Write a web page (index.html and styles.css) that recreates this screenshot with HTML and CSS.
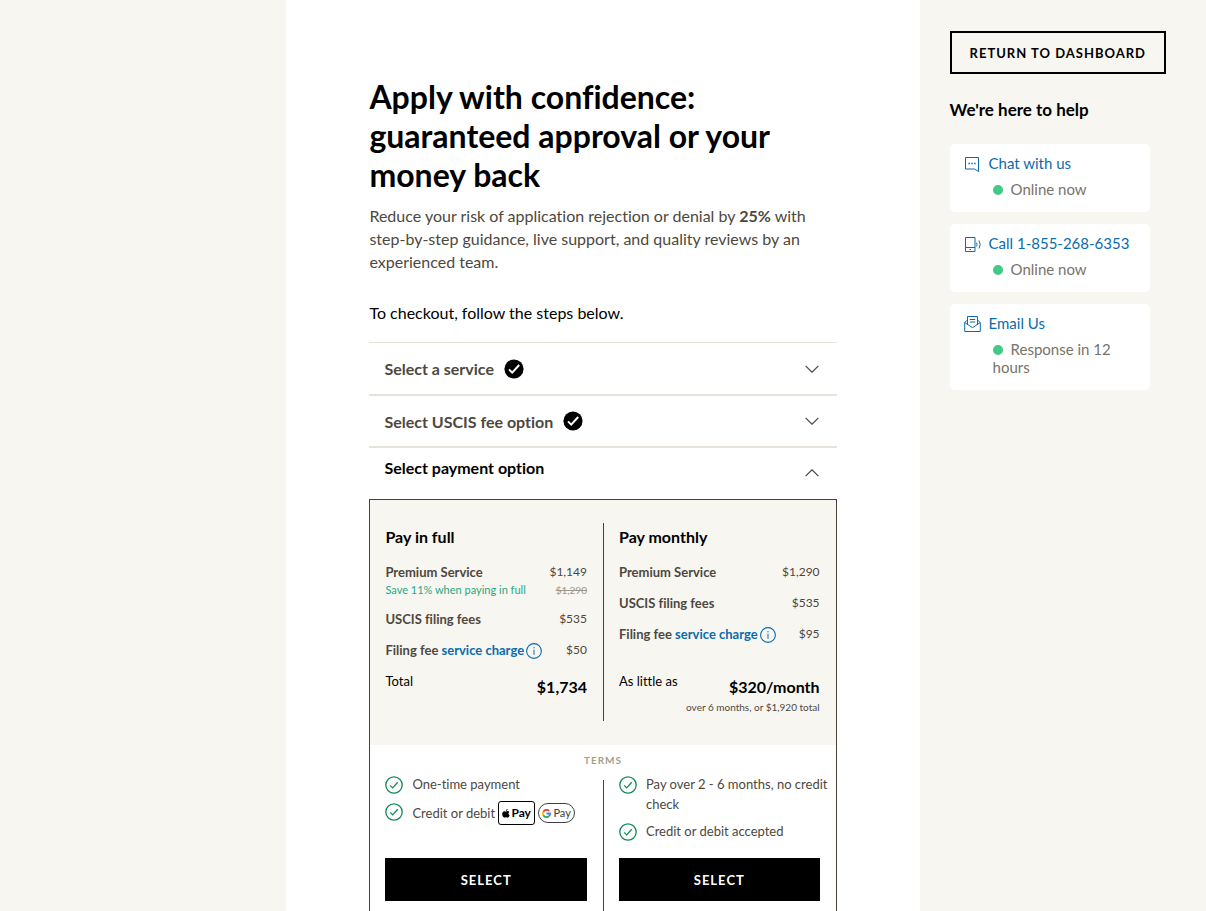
FILE: index.html
```html
<!DOCTYPE html>
<html lang="en">
<head>
<meta charset="utf-8">
<meta name="viewport" content="width=device-width, initial-scale=1">
<title>Checkout</title>
<link rel="stylesheet" href="styles.css">
</head>
<body>
<svg class="sprite" aria-hidden="true">
  <symbol id="badge" viewBox="0 0 20 20"><circle cx="10" cy="10" r="9.6"/><path d="M5 10.4l3.2 3.2 7-7.6" fill="none" stroke="#fff" stroke-width="2"/></symbol>
  <symbol id="chevron" viewBox="0 0 14 8"><path d="M.6.8L7 7.200 13.400.8" fill="none" stroke="currentColor" stroke-width="1.200"/></symbol>
  <symbol id="info" viewBox="0 0 16 16"><g fill="none" stroke="currentColor"><circle cx="8" cy="8" r="7.400" stroke-width="1.100"/><path d="M8 6.800v5M8 4v1.400"/></g></symbol>
  <symbol id="tick" viewBox="0 0 18 18"><g fill="none" stroke="currentColor" stroke-width="1.300"><circle cx="9" cy="9" r="8.200"/><path d="M5.200 9.400l2.500 2.500 5-5.600"/></g></symbol>
</svg>
<div class="page">
  <main class="content">
    <h1 class="title">Apply with confidence: guaranteed approval or your money back</h1>
    <p class="lead">Reduce your risk of application rejection or denial by <strong>25%</strong> with step-by-step guidance, live support, and quality reviews by an experienced team.</p>
    <p class="hint">To checkout, follow the steps below.</p>

    <div class="steps">
      <button type="button" class="step" aria-expanded="false"><span>Select a service</span><svg class="badge"><use href="#badge"/></svg><svg class="chevron"><use href="#chevron"/></svg></button>
      <button type="button" class="step" aria-expanded="false"><span>Select USCIS fee option</span><svg class="badge"><use href="#badge"/></svg><svg class="chevron"><use href="#chevron"/></svg></button>
      <button type="button" class="step step-open" aria-expanded="true"><span>Select payment option</span><svg class="chevron chevron-up"><use href="#chevron"/></svg></button>
    </div>

    <section class="panel">
      <div class="prices">
        <div class="plan">
          <h2 class="plan-name">Pay in full</h2>
          <dl class="fees">
            <div class="fee"><dt>Premium Service<small class="save">Save 11% when paying in full</small></dt><dd>$1,149<s class="old">$1,290</s></dd></div>
            <div class="fee"><dt>USCIS filing fees</dt><dd>$535</dd></div>
            <div class="fee"><dt>Filing fee <a class="charge" href="#charge">service charge<svg class="info"><use href="#info"/></svg></a></dt><dd>$50</dd></div>
            <div class="fee total"><dt>Total</dt><dd><strong>$1,734</strong></dd></div>
          </dl>
        </div>
        <div class="plan">
          <h2 class="plan-name">Pay monthly</h2>
          <dl class="fees">
            <div class="fee"><dt>Premium Service</dt><dd>$1,290</dd></div>
            <div class="fee"><dt>USCIS filing fees</dt><dd>$535</dd></div>
            <div class="fee"><dt>Filing fee <a class="charge" href="#charge">service charge<svg class="info"><use href="#info"/></svg></a></dt><dd>$95</dd></div>
            <div class="fee total"><dt>As little as</dt><dd><strong>$320/month</strong><small>over 6 months, or $1,920 total</small></dd></div>
          </dl>
        </div>
      </div>
      <h3 class="terms-title">TERMS</h3>
      <div class="terms">
        <div class="term">
          <ul class="points">
            <li><svg class="tick"><use href="#tick"/></svg><span>One-time payment</span></li>
            <li><svg class="tick"><use href="#tick"/></svg><span class="methods">Credit or debit
              <span class="wallet apple"><svg class="apple-mark" viewBox="0 0 18 20"><path d="M12.500 0c.2 2-1.500 4.300-3.700 4.300C8.500 2.300 10.400.3 12.500 0zM9.200 5.600c1 0 2-1.100 4-1 1.500.1 2.700.8 3.400 1.900-3.100 1.900-2.600 6 .6 7.200-.8 2.200-2.500 5.800-4.600 5.800-1.400 0-1.800-.8-3.500-.8s-2.200.8-3.500.8C3 19.500.4 15.200.4 11.200c0-4 2.500-6.500 5-6.500 1.700 0 2.800.9 3.800.9z"/></svg>Pay</span>
              <span class="wallet google"><svg class="google-mark" viewBox="0 0 20 20" fill="none" stroke-width="4"><path d="M16 4.500A8 8 0 0 0 3 6" stroke="#ea4335"/><path d="M3 6a8 8 0 0 0 0 8" stroke="#fbbc04"/><path d="M3 14a8 8 0 0 0 12.500 2" stroke="#34a853"/><path d="M15.500 16A8 8 0 0 0 18 10h-8" stroke="#4285f4"/></svg>Pay</span></span></li>
          </ul>
          <button type="button" class="select">SELECT</button>
        </div>
        <div class="term">
          <ul class="points">
            <li><svg class="tick"><use href="#tick"/></svg><span>Pay over 2 - 6 months, no credit check</span></li>
            <li><svg class="tick"><use href="#tick"/></svg><span>Credit or debit accepted</span></li>
          </ul>
          <button type="button" class="select">SELECT</button>
        </div>
      </div>
    </section>
  </main>

  <aside class="side">
    <button type="button" class="return">RETURN TO DASHBOARD</button>
    <h2 class="side-title">We're here to help</h2>
    <div class="card">
      <a class="contact" href="#chat"><svg viewBox="0 0 18 18"><path d="M1.500 2.500h13v14l-4-2.500h-9z"/><path d="M4.500 8.500h1.500M7.300 8.500h1.500M10.100 8.500h1.500" stroke-width="1.500"/></svg>Chat with us</a>
      <p class="status">Online now</p>
    </div>
    <div class="card">
      <a class="contact" href="#call"><svg viewBox="0 0 18 18"><path d="M1.500 2.500h9.500v14H1.500zM1.500 12.500H11M5.500 14.500h1.500M12.500 7.700q1 1.800 0 3.600M15 5.500q2.400 4 0 8"/></svg>Call 1-855-268-6353</a>
      <p class="status">Online now</p>
    </div>
    <div class="card">
      <a class="contact" href="#email"><svg viewBox="0 0 18 18"><path d="M3.500 10V1.500h10V10M3.500 5L.7 7.500v9h15.600v-9L13.500 5M.7 7.500l7.800 5.200 7.800-5.200M5.800 4.500h5.400M5.800 7h5.400"/></svg>Email Us</a>
      <p class="status">Response in 12 hours</p>
    </div>
  </aside>
</div>
</body>
</html>
```
FILE: styles.css
```css
* { box-sizing: border-box; }
body, h1, h2, h3, p, ul, dl, dd { margin: 0; padding: 0; }
body {
  font-family: Lato, "Liberation Sans", sans-serif;
  font-size: 16px;
  font-variant-ligatures: none;
  color: #000;
  background: #f8f6f1;
}
button { font: inherit; color: inherit; cursor: pointer; }
a { text-decoration: none; }
.sprite { display: none; }

.page {
  display: grid;
  grid-template-columns: minmax(0, 42fr) minmax(0, 19fr);
  padding-left: 23.75%;
  min-height: 100vh;
}
.content { background: #fff; padding: 77px 83px 32px; }
.title { font-size: 32px; line-height: 39px; font-weight: 700; }
.lead { margin-top: 10px; line-height: 23px; color: #4d483e; }
.hint { margin-top: 28px; line-height: 24px; }

.steps { margin-top: 17px; border-top: 1px solid #e8e3da; }
.step {
  display: flex;
  align-items: center;
  width: 100%;
  height: 53px;
  padding: 0 18px 0 15px;
  border: 0;
  border-bottom: 2px solid #e8e3da;
  background: none;
  font-weight: 700;
  color: #4d483e;
  text-align: left;
}
.step + .step { height: 52px; }
.step + .step-open { height: 51px; padding-bottom: 12px; border-bottom: 0; color: #000; }
.badge { width: 20px; height: 20px; margin-left: 10px; }
.chevron { width: 14px; height: 8px; margin-left: auto; }
.chevron-up { transform: rotate(180deg); align-self: flex-end; margin-bottom: 10px; color: #4d483e; }

.panel { border: 1px solid #4a4237; }
.prices, .terms { display: grid; grid-template-columns: minmax(0, 1fr) minmax(0, 1fr); }
.prices { padding: 23px 0 24px; background: #f8f6f1; }
.plan, .term { display: flex; flex-direction: column; padding: 0 16px; }
.plan:first-child, .term:first-child { padding-left: 15px; }
.plan + .plan, .term + .term { padding-left: 15px; border-left: 1px solid #4a4237; }
.plan-name { font-size: 16px; line-height: 28px; }
.fees {
  display: flex;
  flex: 1;
  flex-direction: column;
  gap: 11px;
  padding-top: 11px;
  font-size: 13px;
  line-height: 20px;
  color: #4d483e;
}
.fee { display: flex; justify-content: space-between; white-space: nowrap; }
.fee dt { font-weight: 700; }
.fee dd { font-size: 12px; text-align: right; }
.fee small, .old { display: block; font-size: 10px; line-height: 16px; font-weight: 400; }
.fee .save { font-size: 11px; color: #1bab83; }
.old { color: #9b968c; }
.charge { color: #0b6cad; }
.info { width: 16px; height: 16px; margin-left: 2px; vertical-align: -4px; }
.total { height: 50px; margin-top: auto; color: #000; }
.total dt { font-weight: 400; }
.total dd { padding-top: 6px; }
.total strong { font-size: 16px; }
.total small { color: #4d483e; }

.terms-title {
  padding-top: 7px;
  font-size: 10px;
  line-height: 16px;
  letter-spacing: 1px;
  text-align: center;
  color: #a79f8d;
}
.terms { margin-top: 12px; }
.term { padding-bottom: 24px; }
.points {
  display: flex;
  flex-direction: column;
  gap: 7px;
  min-height: 78px;
  margin: -6px -12px 6px 0;
  list-style: none;
  font-size: 13px;
  line-height: 20px;
  color: #4d483e;
}
.points li { display: flex; gap: 9px; }
.tick { flex: none; width: 18px; height: 18px; margin-top: 2px; color: #148a55; }
.methods { display: flex; align-items: center; gap: 3px; white-space: nowrap; }
.wallet {
  display: flex;
  align-items: center;
  justify-content: center;
  gap: 1px;
  width: 37px;
  border: 1px solid #000;
  color: #000;
}
.apple { height: 24px; border-radius: 3px; font-size: 12px; font-weight: 700; }
.google { height: 20px; border-radius: 10px; border-color: #3c4043; color: #3c4043; font-size: 11px; gap: 2px; }
.apple-mark { width: 8px; height: 9px; }
.google-mark { width: 9px; height: 9px; }
.select {
  height: 43px;
  border: 0;
  background: #000;
  color: #fff;
  font-size: 13px;
  font-weight: 700;
  letter-spacing: 1px;
}

.side { padding: 31px 30px; }
.return {
  height: 43px;
  padding: 0 18px;
  border: 2px solid #000;
  background: none;
  font-size: 13px;
  font-weight: 700;
  letter-spacing: 1px;
  white-space: nowrap;
}
.side-title { margin: 24px 0 22px; font-size: 17px; line-height: 24px; }
.card {
  max-width: 200px;
  margin-bottom: 12px;
  padding: 9px 14px 14px;
  border-radius: 5px;
  background: #fff;
}
.contact { display: flex; align-items: center; gap: 7px; font-size: 15px; line-height: 20px; color: #0b6cad; white-space: nowrap; }
.contact svg { flex: none; width: 18px; height: 18px; margin-top: 2px; fill: none; stroke: currentColor; }
.status { margin-top: 7px; padding-left: 29px; font-size: 15px; line-height: 18px; color: #78736a; }
.status::before {
  content: "";
  display: inline-block;
  width: 10px;
  height: 10px;
  margin-right: 8px;
  border-radius: 50%;
  background: #3fca85;
}
```
